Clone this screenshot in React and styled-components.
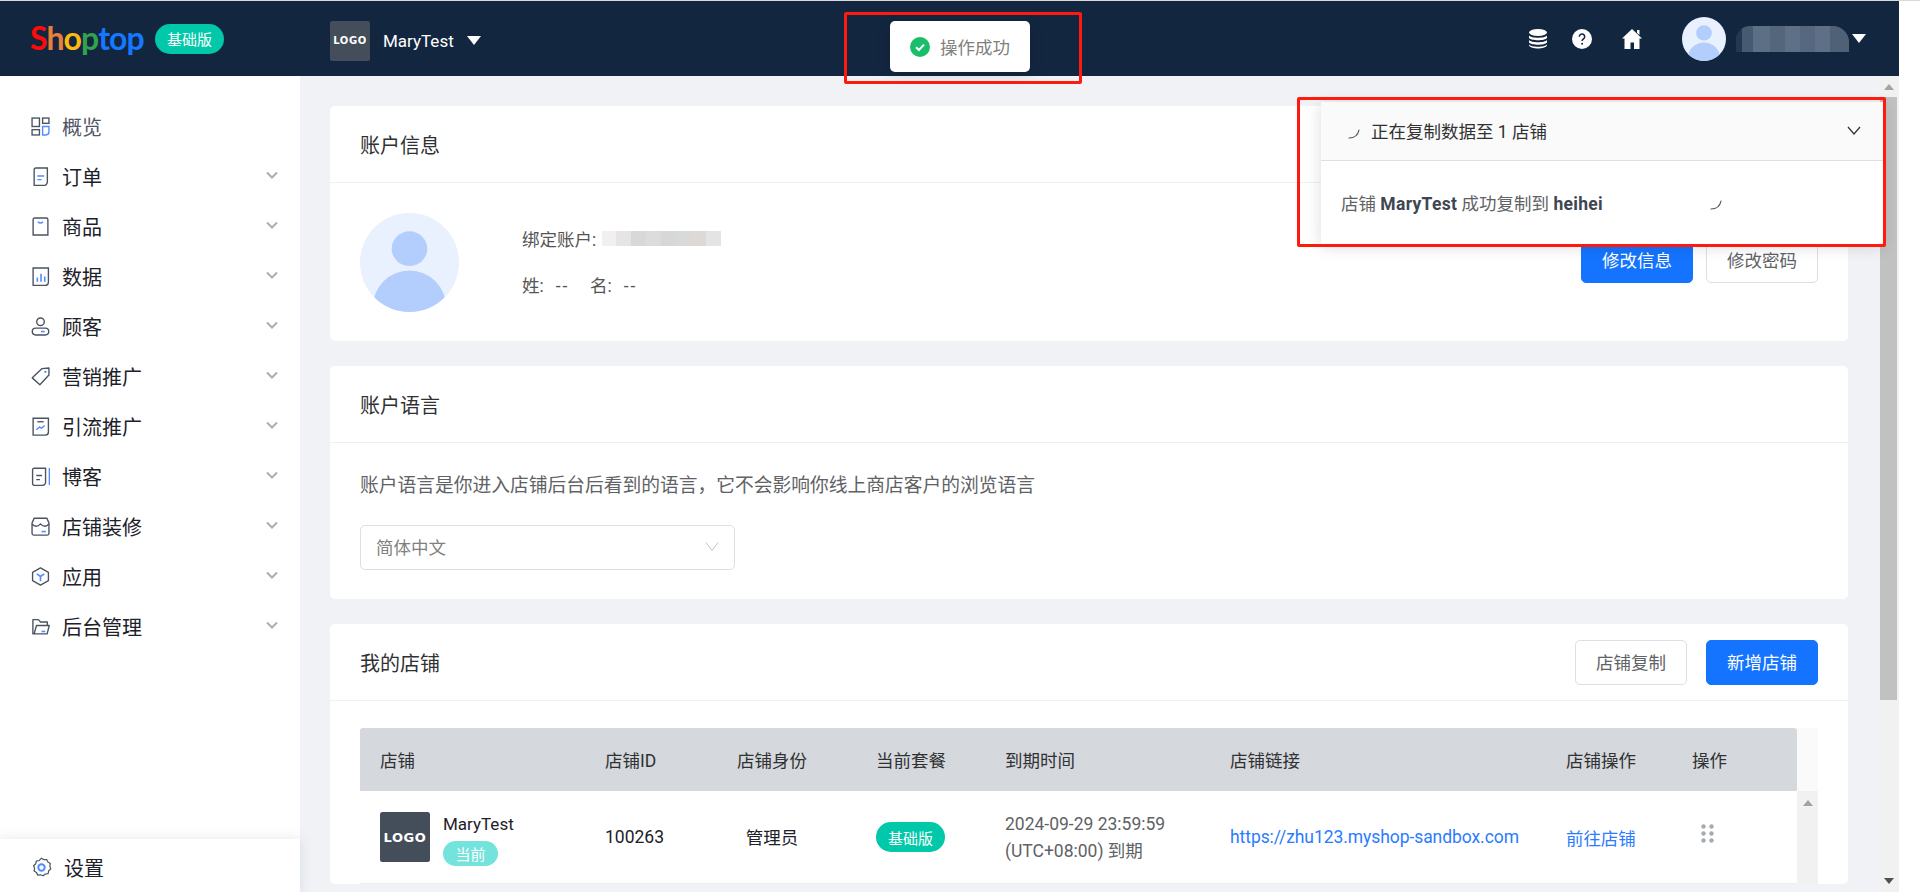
import React from 'react';
import styled, { createGlobalStyle } from 'styled-components';

const GlobalStyle = createGlobalStyle`
  html, body { margin: 0; padding: 0; background: #fff; }
  body { font-family: Roboto, "Noto Sans CJK SC", sans-serif; font-size: 17.5px; color: #303133; }
  * { box-sizing: border-box; }
`;

// --- Page frame ---

const Page = styled.div`
  position: relative;
  width: 1920px;
  height: 892px;
  overflow: hidden;
  display: flex;
  flex-direction: column;
  background: #fff;
`;

const TopLine = styled.div`
  height: 1px;
  flex: none;
  background: #d9d9d9;
`;

const Shell = styled.div`
  width: 1899px;
  flex: 1;
  min-height: 0;
  display: flex;
  flex-direction: column;
`;

const Header = styled.header`
  height: 75px;
  flex: none;
  display: flex;
  align-items: center;
  background: #12263f;
  color: #fff;
  padding-left: 30px;
`;

const Brand = styled.div`
  width: 125px;
  font-family: Lato, sans-serif;
  font-size: 32px;
  font-weight: 700;
  letter-spacing: -0.9px;
  line-height: 40px;
  margin-top: -2px;
`;

const BrandLetter = styled.span`
  color: ${(p) => p.$color};
`;

const PlanBadge = styled.span`
  display: inline-flex;
  align-items: center;
  justify-content: center;
  width: 69px;
  height: 30px;
  border-radius: 15px;
  background: #00c8a8;
  color: #fff;
  font-size: 15px;
`;

const LogoBox = styled.div`
  width: ${(p) => p.$size}px;
  height: ${(p) => p.$size}px;
  flex: none;
  display: flex;
  align-items: center;
  justify-content: center;
  background: #434e5a;
  border-radius: 2.5px;
  color: #fff;
  font-family: "DejaVu Sans", sans-serif;
  font-weight: 700;
  font-size: ${(p) => (p.$size > 45 ? 13 : 10)}px;
  letter-spacing: 0.6px;
`;

const StoreSwitch = styled.div`
  display: flex;
  align-items: center;
  margin-left: 106px;
  margin-top: 4px;
`;

const StoreName = styled.span`
  margin-left: 13px;
  font-size: 17px;
`;

const Caret = styled.span`
  width: 0;
  height: 0;
  border-left: 7px solid transparent;
  border-right: 7px solid transparent;
  border-top: 9px solid #fff;
  margin-left: ${(p) => p.$gap}px;
`;

const HeaderTools = styled.div`
  margin-left: auto;
  display: flex;
  align-items: center;
  padding-right: 33px;
`;

const ToolIcon = styled.svg`
  width: 22px;
  height: 22px;
  margin-right: ${(p) => p.$gap}px;
  display: block;
`;

const Avatar = styled.div`
  width: ${(p) => p.$size}px;
  height: ${(p) => p.$size}px;
  flex: none;
  border-radius: 50%;
  overflow: hidden;
  background: #e9f1fe;
`;

const HeaderName = styled.div`
  width: 113px;
  height: 26px;
  margin: 0 3px 0 10px;
  border-radius: 14px 16px 0 0;
  background: linear-gradient(90deg, #26384f 0 5%, #465a72 5% 15%, #5d6f85 15% 30%, #53667c 30% 43%, #5f7086 43% 57%, #56687f 57% 70%, #5f7086 70% 83%, #4f6177 83% 100%);
`;

const Body = styled.div`
  flex: 1;
  min-height: 0;
  display: flex;
`;

// --- Sidebar ---

const Sidebar = styled.aside`
  width: 300px;
  flex: none;
  display: flex;
  flex-direction: column;
  background: #fff;
  padding-top: 25px;
`;

const NavItem = styled.div`
  height: 50px;
  flex: none;
  display: flex;
  align-items: center;
  padding: 0 22px 0 31px;
  color: ${(p) => (p.$muted ? '#4f5663' : '#1d2129')};
  font-size: 20px;
`;

const NavIcon = styled.svg`
  width: 19px;
  height: 19px;
  flex: none;
  margin-right: 12px;
`;

const NavChevron = styled.svg`
  width: 12px;
  height: 8px;
  margin-left: auto;
  margin-top: -3px;
`;

const SidebarFooter = styled.div`
  margin-top: auto;
  height: 53px;
  display: flex;
  align-items: center;
  padding: 3px 0 0 31px;
  font-size: 20px;
  color: #1d2129;
  background: #fff;
  box-shadow: 0 0 12px rgba(40, 60, 90, 0.12);
  position: relative;
`;

const FooterIcon = styled.svg`
  width: 21px;
  height: 21px;
  margin-right: 12px;
`;

// --- Content ---

const Content = styled.main`
  flex: 1;
  min-width: 0;
  overflow: hidden;
  background: #f0f2f6;
  padding: 30px 32px 0 30px;
  display: flex;
  flex-direction: column;
  gap: 25px;
`;

const Card = styled.section`
  flex: none;
  background: #fff;
  border-radius: 5px;
`;

const CardHead = styled.div`
  height: 77px;
  display: flex;
  align-items: center;
  justify-content: space-between;
  padding: 0 30px;
  border-bottom: 1px solid #eef0f3;
`;

const CardTitle = styled.h3`
  margin: 0;
  font-size: 20px;
  font-weight: 400;
  color: #303133;
`;

const AccountBody = styled.div`
  height: 158px;
  display: flex;
  align-items: center;
  padding: 0 30px;
`;

const AccountInfo = styled.div`
  margin: -2px 0 0 63px;
  display: flex;
  flex-direction: column;
  gap: 20px;
  color: #555;
`;

const InfoLine = styled.div`
  height: 26px;
  display: flex;
  align-items: center;
`;

const NamePart = styled.span`
  width: 68px;
`;

const NameDash = styled.span`
  margin-left: 12px;
  letter-spacing: 2px;
`;

const BoundMosaic = styled.span`
  width: 119px;
  height: 15px;
  margin-left: 6px;
  background: linear-gradient(90deg, #f3eff0 0 12%, #e5e5e5 12% 24%, #d7d8d9 24% 37%, #dcdcdc 37% 50%, #d6d8d8 50% 62%, #d8dada 62% 75%, #ddd9d6 75% 87%, #e3e4e6 87% 100%);
`;

const ButtonRow = styled.div`
  margin-left: auto;
  margin-top: ${(p) => p.$lift || 0}px;
  display: flex;
  gap: ${(p) => p.$gap}px;
`;

const Button = styled.button`
  width: 112px;
  height: 45px;
  padding: 0 0 2px;
  border-radius: 5px;
  font: inherit;
  font-size: 17.5px;
  cursor: pointer;
  border: 1px solid ${(p) => (p.$primary ? '#1474ff' : '#dcdfe6')};
  background: ${(p) => (p.$primary ? '#1474ff' : '#fff')};
  color: ${(p) => (p.$primary ? '#fff' : '#606266')};
`;

const LanguageBody = styled.div`
  padding: 29px 30px 29px;
`;

const Hint = styled.p`
  margin: 0 0 25px;
  line-height: 28px;
  font-size: 18.75px;
  color: #606266;
`;

const SelectBox = styled.div`
  width: 375px;
  height: 45px;
  display: flex;
  align-items: center;
  justify-content: space-between;
  padding: 0 15px 3px;
  border: 1px solid #dcdfe6;
  border-radius: 5px;
  color: #808080;
`;

// --- Store table ---

const StoreBody = styled.div`
  padding: 27px 30px 0;
  display: flex;
`;

const TableMain = styled.div`
  width: 1437px;
  flex: none;
`;

const HeadRow = styled.div`
  height: 63px;
  display: grid;
  grid-template-columns: 225px 132px 139px 129px 225px 336px 126px 1fr;
  align-items: center;
  padding-left: 20px;
  background: #d5d8dc;
  border-radius: 3px 3px 0 0;
  color: #303133;
`;

const DataRow = styled.div`
  height: 93px;
  display: grid;
  grid-template-columns: 225px 132px 139px 129px 225px 336px 126px 1fr;
  align-items: center;
  padding-left: 20px;
  border-bottom: 1px solid #ebeef2;
  color: #1d2129;
`;

const StoreCell = styled.div`
  display: flex;
  align-items: center;
  gap: 13px;
`;

const StoreText = styled.div`
  display: flex;
  flex-direction: column;
  align-items: flex-start;
  gap: 7px;
  margin-top: 5px;
  font-size: 17px;
`;

const CurrentBadge = styled.span`
  width: 55px;
  height: 25px;
  display: flex;
  align-items: center;
  justify-content: center;
  border-radius: 13px;
  background: #73e3dc;
  color: #fff;
  font-size: 15px;
`;

const IdCell = styled.span`
  margin-top: -1px;
`;

const RoleCell = styled.div`
  width: 70px;
  text-align: center;
  margin-top: -1px;
`;

const ExpiryCell = styled.div`
  line-height: 27px;
  color: #606266;
  margin-top: 1px;
`;

const TableLink = styled.a`
  color: #2b7bff;
  text-decoration: none;
  letter-spacing: -0.07px;
`;

const DotsIcon = styled.svg`
  width: 13px;
  height: 19px;
  margin: -8px 0 0 9px;
  display: block;
`;

const TableGutter = styled.div`
  width: 21px;
  flex: none;
  display: flex;
  flex-direction: column;
`;

const GutterHead = styled.div`
  height: 63px;
  background: #fafafa;
`;

const GutterTrack = styled.div`
  height: 93px;
  background: #f1f1f1;
  padding-top: 9px;
  display: flex;
  justify-content: center;
`;

// --- Scrollbars ---

const Arrow = styled.span`
  width: 0;
  height: 0;
  flex: none;
  border-left: 5px solid transparent;
  border-right: 5px solid transparent;
  border-bottom: ${(p) => (p.$down ? 'none' : `6px solid #a3a3a3`)};
  border-top: ${(p) => (p.$down ? `6px solid #505050` : 'none')};
`;

const PageScrollbar = styled.div`
  width: 19px;
  flex: none;
  background: #f1f1f1;
  display: flex;
  flex-direction: column;
  align-items: center;
  padding: 8px 2px 8px 0;
`;

const Thumb = styled.div`
  width: 17px;
  height: 603px;
  margin-top: 7px;
  background: #c1c1c1;
`;

const ArrowDownSlot = styled.div`
  margin-top: auto;
  display: flex;
`;

// --- Overlays ---

const Toast = styled.div`
  position: absolute;
  left: 890px;
  top: 21px;
  width: 140px;
  height: 51px;
  display: flex;
  align-items: center;
  padding-left: 20px;
  gap: 10px;
  background: #fff;
  border-radius: 5px;
  box-shadow: 0 3px 14px rgba(0, 0, 0, 0.12);
  color: #808080;
`;

const CopyPanel = styled.div`
  position: absolute;
  left: 1321px;
  top: 102px;
  width: 562px;
  height: 143px;
  background: #fff;
  border-radius: 3px;
  box-shadow: 0 2px 16px rgba(0, 0, 0, 0.14);
`;

const PanelHead = styled.div`
  height: 59px;
  display: flex;
  align-items: center;
  padding: 0 22px 2px 27px;
  background: #fafafa;
  border-bottom: 1px solid #dcdfe6;
  color: #303133;
`;

const PanelTitle = styled.span`
  margin-left: 11px;
`;

const PanelChevron = styled.svg`
  width: 14px;
  height: 9px;
  margin-left: auto;
`;

const PanelRow = styled.div`
  display: flex;
  align-items: center;
  height: 82px;
  padding-left: 20px;
  color: #606266;
`;

const PanelText = styled.span`
  width: 369px;
  b { color: #3e4654; font-weight: 700; letter-spacing: 0.3px; }
`;

const Spinner = styled.svg`
  width: 12px;
  height: 10px;
  flex: none;
  margin-top: ${(p) => p.$top || 0}px;
`;

const RedFrame = styled.div`
  position: absolute;
  left: ${(p) => p.$x}px;
  top: ${(p) => p.$y}px;
  width: ${(p) => p.$w}px;
  height: ${(p) => p.$h}px;
  border: 3px solid #ff1a10;
  border-radius: 2px;
  pointer-events: none;
`;

// --- Drawings ---

const DARK = '#4b5361';
const BLUE = '#4c8dff';

const navIcons = {
  overview: (
    <>
      <rect x="1" y="1" width="7" height="8" stroke={DARK} />
      <rect x="11" y="1" width="6" height="5" stroke={DARK} />
      <rect x="1" y="12" width="7" height="5" stroke={DARK} />
      <path d="M11 9h6v5a3 3 0 0 1-3 3h-3z" stroke={BLUE} />
    </>
  ),
  order: (
    <>
      <path d="M3 2.5A1.5 1.5 0 0 1 4.5 1h11v13a3.5 3.5 0 0 1-3.5 3.5H3z" stroke={DARK} />
      <path d="M6 8.5h6.5M6 12h4" stroke={BLUE} />
    </>
  ),
  goods: (
    <>
      <path d="M2 2.5A1.5 1.5 0 0 1 3.5 1h11A1.5 1.5 0 0 1 16 2.5v14.5H2z" stroke={DARK} />
      <path d="M6.5 4.5c1.5 1.5 3.5 1.5 5 0" stroke={BLUE} />
    </>
  ),
  data: (
    <>
      <path d="M2 1h14.5v13.5a3 3 0 0 1-3 3H2z" stroke={DARK} />
      <path d="M6 14V10M9.5 14V6.5M13 14V9" stroke={BLUE} strokeWidth="1.5" />
    </>
  ),
  customer: (
    <>
      <circle cx="9" cy="4.5" r="3.6" stroke={DARK} />
      <rect x="1.2" y="10.5" width="15.6" height="6.5" rx="3.25" stroke={DARK} />
      <path d="M9.5 13.8h3.5" stroke={BLUE} strokeWidth="1.5" />
    </>
  ),
  tag: (
    <>
      <path d="M1.2 10.3 10.5 1.5 17 1v6.5l-8.6 9.3z" stroke={DARK} strokeLinejoin="round" />
      <circle cx="13.6" cy="4.6" r="1.1" fill={BLUE} />
    </>
  ),
  traffic: (
    <>
      <path d="M2 1.2h14.5v13a3 3 0 0 1-3 3H2z" stroke={DARK} />
      <path d="M6 4.5h6" stroke={DARK} />
      <path d="M5 12l3-2.5 2 1 3-2.5" stroke={BLUE} />
    </>
  ),
  blog: (
    <>
      <path d="M1.5 3A1.7 1.7 0 0 1 3.2 1.2h10.6v13.2a3 3 0 0 1-3 3H3.2a1.7 1.7 0 0 1-1.7-1.7z" stroke={DARK} />
      <path d="M5 8h5.5M5 12h3.5" stroke={DARK} />
      <path d="M17.4 1v16" stroke={BLUE} />
    </>
  ),
  shop: (
    <>
      <path d="M3 1.2h12l2 4.5v9.8a1.7 1.7 0 0 1-1.7 1.7H2.7A1.7 1.7 0 0 1 1 15.5V5.7z" stroke={DARK} />
      <path d="M1 6.5c2.5 3 5 3 8 0 3 3 5.5 3 8 0" stroke={DARK} />
      <path d="M10 13.8h4" stroke={BLUE} strokeWidth="1.5" />
    </>
  ),
  app: (
    <>
      <path d="M9 .9 16.5 5v8L9 17.1 1.5 13V5z" stroke={DARK} strokeLinejoin="round" />
      <path d="M5.5 6.5 9 9l3.5-2.5M9 9v4.5" stroke={BLUE} strokeWidth="1.5" />
    </>
  ),
  admin: (
    <>
      <path d="M3 16H1.8V2.5H7l2 2.2h6.5V8M3 16 5.2 8H17.3L15.3 16z" stroke={DARK} strokeLinejoin="round" />
      <path d="M10 13.7h3.5" stroke={BLUE} strokeWidth="1.5" />
    </>
  ),
};

const navItems = [
  { key: 'overview', label: '概览', muted: true },
  { key: 'order', label: '订单', more: true },
  { key: 'goods', label: '商品', more: true },
  { key: 'data', label: '数据', more: true },
  { key: 'customer', label: '顾客', more: true },
  { key: 'tag', label: '营销推广', more: true },
  { key: 'traffic', label: '引流推广', more: true },
  { key: 'blog', label: '博客', more: true },
  { key: 'shop', label: '店铺装修', more: true },
  { key: 'app', label: '应用', more: true },
  { key: 'admin', label: '后台管理', more: true },
];

const brandLetters = [
  ['S', '#ff0a0a'],
  ['h', '#e8803a'],
  ['o', '#fdb90f'],
  ['p', '#32a24c'],
  ['t', '#1677ff'],
  ['o', '#1677ff'],
  ['p', '#1677ff'],
];

const PersonArt = () => (
  <svg width="100%" height="100%" viewBox="0 0 100 100">
    <ellipse cx="50" cy="36" rx="18" ry="17.5" fill="#b3cefd" />
    <circle cx="50" cy="95" r="37" fill="#b3cefd" />
  </svg>
);

const CheckBadge = () => (
  <svg width="20" height="20" viewBox="0 0 20 20">
    <circle cx="10" cy="10" r="10" fill="#19be6b" />
    <path d="M6 10.2 8.9 13 14 7.6" fill="none" stroke="#fff" strokeWidth="2" />
  </svg>
);

const SpinnerArc = ({ top }) => (
  <Spinner $top={top} viewBox="0 0 12 10">
    <path d="M1 9c5 0 9-3 10-8" fill="none" stroke="#555" strokeWidth="1.2" strokeLinecap="round" />
  </Spinner>
);

const App = () => {
  return (
    <Page>
      <GlobalStyle />
      <TopLine />
      <Shell>
        <Header>
          <Brand>
            {brandLetters.map(([ch, color], i) => (
              <BrandLetter key={i} $color={color}>{ch}</BrandLetter>
            ))}
          </Brand>
          <PlanBadge>基础版</PlanBadge>
          <StoreSwitch>
            <LogoBox $size={40}>LOGO</LogoBox>
            <StoreName>MaryTest</StoreName>
            <Caret $gap={13} />
          </StoreSwitch>
          <HeaderTools>
            <ToolIcon $gap={22} viewBox="0 0 22 22">
              <ellipse cx="11" cy="4.5" rx="9" ry="3.5" fill="#fff" />
              <path d="M2 7.5c2 3 16 3 18 0v2.5c-2 3-16 3-18 0zM2 12c2 3 16 3 18 0v2.5c-2 3-16 3-18 0zM2 16.5c2 3 16 3 18 0v1c-2 4-16 4-18 0z" fill="#fff" />
            </ToolIcon>
            <ToolIcon $gap={28} viewBox="0 0 22 22">
              <circle cx="11" cy="11" r="10" fill="#fff" />
              <path d="M8.3 8.7a2.7 2.7 0 1 1 4.2 2.2c-.9.6-1.4 1.1-1.4 2.2" fill="none" stroke="#12263f" strokeWidth="1.5" />
              <circle cx="11.1" cy="15.7" r="1" fill="#12263f" />
            </ToolIcon>
            <ToolIcon $gap={39} viewBox="0 0 22 22">
              <path d="M11 1 21 10.5h-2.500V21H3.500V10.500H1z" fill="#fff" />
              <path d="M16 2h2.500v5L16 5z" fill="#fff" />
              <rect x="9.500" y="14.500" width="3.500" height="6.500" fill="#12263f" />
            </ToolIcon>
            <Avatar $size={44}><PersonArt /></Avatar>
            <HeaderName />
            <Caret $gap={0} />
          </HeaderTools>
        </Header>
        <Body>
          <Sidebar>
            {navItems.map((item) => (
              <NavItem key={item.key} $muted={item.muted}>
                <NavIcon viewBox="0 0 18 18" fill="none" strokeWidth="1.3">{navIcons[item.key]}</NavIcon>
                {item.label}
                {item.more && (
                  <NavChevron viewBox="0 0 12 8">
                    <path d="M1 1.5 6 6.5 11 1.5" fill="none" stroke="#a9aeb8" strokeWidth="2" />
                  </NavChevron>
                )}
              </NavItem>
            ))}
            <SidebarFooter>
              <FooterIcon viewBox="0 0 21 21" fill="none">
                <path d="M10.5 1.2l2.400 1.500 2.800-.2 1.200 2.500 2.400 1.500-.5 2.800 1 2.600-2.100 1.900-.6 2.800-2.800.4-2.100 1.800-2.600-1-2.800.3-1.300-2.500-2.400-1.500.5-2.800-1-2.600 2.100-1.900.6-2.800 2.800-.4z" stroke={DARK} strokeWidth="1.2" strokeLinejoin="round" />
                <circle cx="10.5" cy="10.5" r="3.2" stroke={BLUE} strokeWidth="2" />
              </FooterIcon>
              设置
            </SidebarFooter>
          </Sidebar>
          <Content>
            <Card>
              <CardHead><CardTitle>账户信息</CardTitle></CardHead>
              <AccountBody>
                <Avatar $size={99}><PersonArt /></Avatar>
                <AccountInfo>
                  <InfoLine>绑定账户:<BoundMosaic /></InfoLine>
                  <InfoLine>
                    <NamePart>姓:<NameDash>--</NameDash></NamePart>
                    <NamePart>名:<NameDash>--</NameDash></NamePart>
                  </InfoLine>
                </AccountInfo>
                <ButtonRow $gap={13} $lift={-3}>
                  <Button $primary>修改信息</Button>
                  <Button>修改密码</Button>
                </ButtonRow>
              </AccountBody>
            </Card>
            <Card>
              <CardHead><CardTitle>账户语言</CardTitle></CardHead>
              <LanguageBody>
                <Hint>账户语言是你进入店铺后台后看到的语言，它不会影响你线上商店客户的浏览语言</Hint>
                <SelectBox>
                  简体中文
                  <svg width="14" height="14" viewBox="0 0 14 14">
                    <path d="M1 3.5 7 11.5 13 3.5" fill="none" stroke="#c0c4cc" strokeWidth="1" />
                  </svg>
                </SelectBox>
              </LanguageBody>
            </Card>
            <Card>
              <CardHead>
                <CardTitle>我的店铺</CardTitle>
                <ButtonRow $gap={19}>
                  <Button>店铺复制</Button>
                  <Button $primary>新增店铺</Button>
                </ButtonRow>
              </CardHead>
              <StoreBody>
                <TableMain>
                  <HeadRow>
                    <span>店铺</span>
                    <span>店铺ID</span>
                    <span>店铺身份</span>
                    <span>当前套餐</span>
                    <span>到期时间</span>
                    <span>店铺链接</span>
                    <span>店铺操作</span>
                    <span>操作</span>
                  </HeadRow>
                  <DataRow>
                    <StoreCell>
                      <LogoBox $size={50}>LOGO</LogoBox>
                      <StoreText>
                        <span>MaryTest</span>
                        <CurrentBadge>当前</CurrentBadge>
                      </StoreText>
                    </StoreCell>
                    <IdCell>100263</IdCell>
                    <RoleCell>管理员</RoleCell>
                    <div><PlanBadge>基础版</PlanBadge></div>
                    <ExpiryCell>
                      2024-09-29 23:59:59<br />
                      (UTC+08:00) 到期
                    </ExpiryCell>
                    <TableLink>https://zhu123.myshop-sandbox.com</TableLink>
                    <TableLink>前往店铺</TableLink>
                    <DotsIcon viewBox="0 0 13 19" fill="#a6aab2">
                      <circle cx="2.5" cy="2.5" r="2.2" />
                      <circle cx="10.5" cy="2.5" r="2.2" />
                      <circle cx="2.5" cy="9.5" r="2.2" />
                      <circle cx="10.5" cy="9.5" r="2.2" />
                      <circle cx="2.5" cy="16.5" r="2.2" />
                      <circle cx="10.5" cy="16.5" r="2.2" />
                    </DotsIcon>
                  </DataRow>
                </TableMain>
                <TableGutter>
                  <GutterHead />
                  <GutterTrack><Arrow /></GutterTrack>
                </TableGutter>
              </StoreBody>
            </Card>
          </Content>
          <PageScrollbar>
            <Arrow />
            <Thumb />
            <ArrowDownSlot><Arrow $down /></ArrowDownSlot>
          </PageScrollbar>
        </Body>
      </Shell>

      <Toast>
        <CheckBadge />
        操作成功
      </Toast>

      <CopyPanel>
        <PanelHead>
          <SpinnerArc top={7} />
          <PanelTitle>正在复制数据至 1 店铺</PanelTitle>
          <PanelChevron viewBox="0 0 14 9">
            <path d="M1 1 7 8 13 1" fill="none" stroke="#303133" strokeWidth="1.2" />
          </PanelChevron>
        </PanelHead>
        <PanelRow>
          <PanelText>店铺 <b>MaryTest</b> 成功复制到 <b>heihei</b></PanelText>
          <SpinnerArc top={6} />
        </PanelRow>
      </CopyPanel>

      <RedFrame $x={844} $y={12} $w={238} $h={72} />
      <RedFrame $x={1297} $y={97} $w={589} $h={150} />
    </Page>
  );
};

export default App;
